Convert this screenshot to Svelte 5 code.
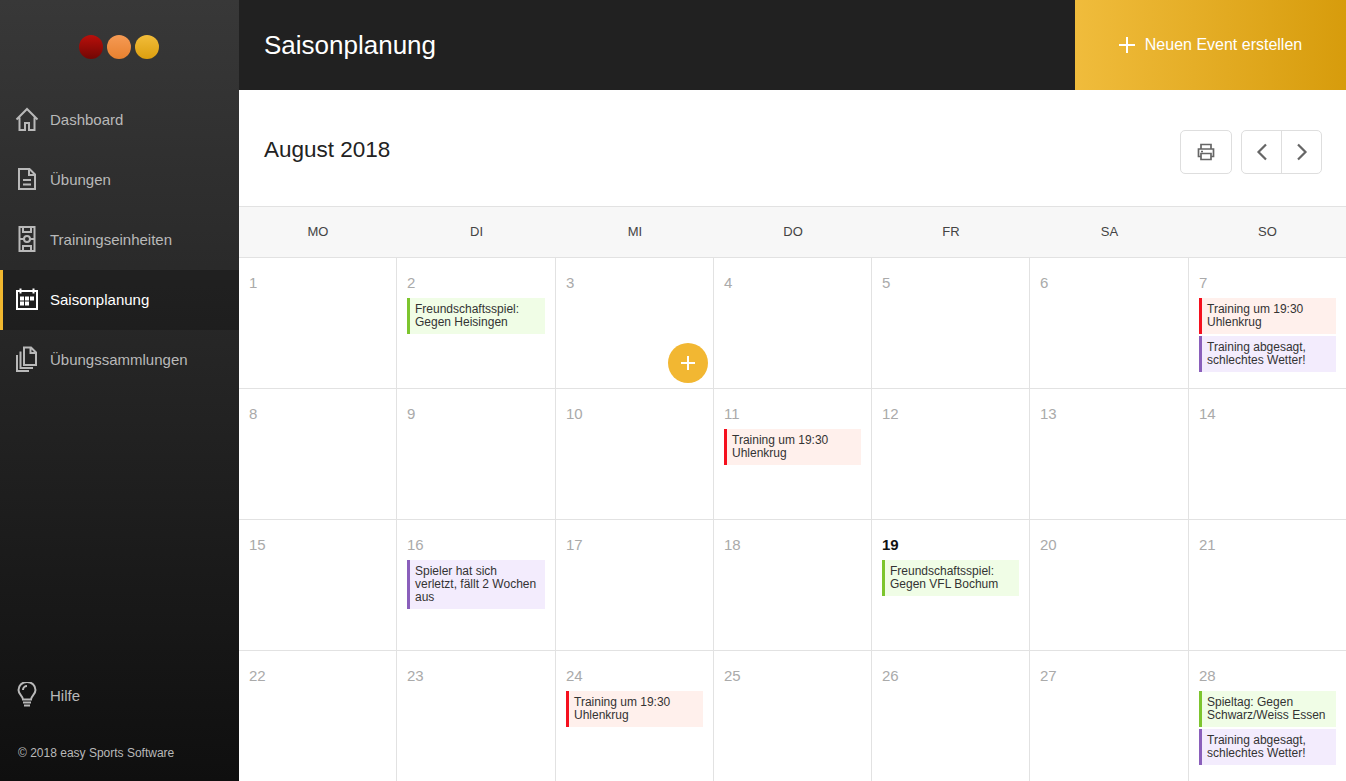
<script lang="ts">
  const nav = [
    { label: 'Dashboard', icon: 'home' },
    { label: 'Übungen', icon: 'doc' },
    { label: 'Trainingseinheiten', icon: 'field' },
    { label: 'Saisonplanung', icon: 'calendar', active: true },
    { label: 'Übungssammlungen', icon: 'copies' },
  ];

  const weekdays = ['MO', 'DI', 'MI', 'DO', 'FR', 'SA', 'SO'];

  const training = { type: 'red', text: ['Training um 19:30', 'Uhlenkrug'] };
  const cancelled = { type: 'purple', text: ['Training abgesagt,', 'schlechtes Wetter!'] };

  const events: Record<number, { type: string; text: string[] }[]> = {
    2: [{ type: 'green', text: ['Freundschaftsspiel:', 'Gegen Heisingen'] }],
    7: [training, cancelled],
    11: [training],
    16: [{ type: 'purple', text: ['Spieler hat sich', 'verletzt, fällt 2 Wochen', 'aus'] }],
    19: [{ type: 'green', text: ['Freundschaftsspiel:', 'Gegen VFL Bochum'] }],
    24: [training],
    28: [{ type: 'green', text: ['Spieltag: Gegen', 'Schwarz/Weiss Essen'] }, cancelled],
  };

  const days = Array.from({ length: 28 }, (_, i) => i + 1);
</script>

<div class="app">
  <aside class="sidebar">
    <div class="logo">
      <span class="dot dark-red"></span>
      <span class="dot orange"></span>
      <span class="dot yellow"></span>
    </div>
    <nav>
      {#each nav as item}
        <div class="nav-item" class:active={item.active}>
          <svg class="nav-icon" viewBox="0 0 24 26" fill="none" stroke="currentColor" stroke-width="2">
            {#if item.icon === 'home'}
              <path d="M1.500 13.500 12 3l10.500 10.500M4.500 11.500V24h5.500v-7h4v7h5.500V11.500" />
            {:else if item.icon === 'doc'}
              <path d="M4 3h10.500l5.500 5.500V23H4zM14 3v6h6M8 14h8M8 18.500h8" />
            {:else if item.icon === 'field'}
              <path d="M4.500 1h15v24h-15zM4.500 13H9M15 13h4.500M8 1v5h8V1M8 25v-5h8v5" />
              <circle cx="12" cy="13" r="3" />
            {:else if item.icon === 'calendar'}
              <path d="M5.500 5H2v18h20V5h-3.500M5.500 5h13M5.500 2.500v5M18.500 2.500v5" />
              <path class="solid" d="M5 10.500h4v4H5zM10 10.500h4v4h-4zM15 10.500h4v4h-4zM5 15.500h4v4H5zM10 15.500h4v4h-4z" />
            {:else if item.icon === 'copies'}
              <path d="M9 1.500h7l5 5V19H9zM15.500 1.500V7H21M5.500 5.500V22H18M2 9v16h12" />
            {/if}
          </svg>
          <span>{item.label}</span>
        </div>
      {/each}
    </nav>
    <div class="help">
      <svg class="nav-icon" viewBox="0 0 24 26" fill="none" stroke="currentColor" stroke-width="2">
        <path d="M8 17.500c0-3.500-4.500-5-4.500-9.500a8.500 8 0 0 1 17 0c0 4.500-4.500 6-4.500 9.500zM8 20.500h8M9 23.500h6M8 8a4 4 0 0 1 4-4" />
      </svg>
      <span>Hilfe</span>
    </div>
    <div class="copyright">© 2018 easy Sports Software</div>
  </aside>

  <main>
    <header class="topbar">
      <h1>Saisonplanung</h1>
      <div class="create">
        <svg viewBox="0 0 16 16" width="16" height="16" stroke="#fff" stroke-width="2"><path d="M8 0v16M0 8h16" /></svg>
        <span>Neuen Event erstellen</span>
      </div>
    </header>

    <section class="month-bar">
      <h2>August 2018</h2>
      <div class="controls">
        <div class="btn">
          <svg viewBox="0 0 20 20" width="20" height="20" fill="none" stroke="#666" stroke-width="1.700">
            <path d="M5 7V2.500h10V7M5 14.500H2.500V7h15v7.500H15M5 11.500h10v6H5zM5 9.500h2" />
          </svg>
        </div>
        <div class="btn-group">
          <div class="btn-part first">
            <svg viewBox="0 0 12 20" width="12" height="20" fill="none" stroke="#666" stroke-width="2.200"><path d="M10 2.500 2.500 10l7.500 7.500" /></svg>
          </div>
          <div class="btn-part">
            <svg viewBox="0 0 12 20" width="12" height="20" fill="none" stroke="#666" stroke-width="2.200"><path d="M2 2.500 9.500 10 2 17.500" /></svg>
          </div>
        </div>
      </div>
    </section>

    <section class="calendar">
      <div class="week-head">
        {#each weekdays as d}
          <div>{d}</div>
        {/each}
      </div>
      <div class="grid">
        {#each days as day}
          <div class="cell">
            <div class="num" class:today={day === 19}>{day}</div>
            {#each events[day] ?? [] as ev}
              <div class="event {ev.type}">
                {#each ev.text as line}
                  <div>{line}</div>
                {/each}
              </div>
            {/each}
            {#if day === 3}
              <div class="fab">
                <svg viewBox="0 0 14 14" width="14" height="14" stroke="#fff" stroke-width="2"><path d="M7 0v14M0 7h14" /></svg>
              </div>
            {/if}
          </div>
        {/each}
      </div>
    </section>
  </main>
</div>

<style>
  :global(body) {
    overflow: hidden;
  }

  .app {
    display: flex;
    width: 1346px;
    height: 781px;
    overflow: hidden;
    font-family: "Liberation Sans", Arial, sans-serif;
    background: #fff;
  }

  .sidebar {
    width: 239px;
    flex: none;
    display: flex;
    flex-direction: column;
    background: linear-gradient(180deg, #383838 0%, #0f0f0f 100%);
    color: #b9b9b9;
  }

  .logo {
    height: 90px;
    display: flex;
    align-items: center;
    justify-content: center;
    gap: 4px;
    padding: 3px 2px 0 0;
    box-sizing: border-box;
  }

  .dot {
    width: 24px;
    height: 24px;
    border-radius: 50%;
  }

  .dark-red { background: linear-gradient(180deg, #b90f0b, #720704); }
  .orange { background: linear-gradient(180deg, #f59a54, #e8812f); }
  .yellow { background: linear-gradient(180deg, #f2bd3a, #dc9f0f); }

  .nav-item {
    height: 60px;
    display: flex;
    align-items: center;
    gap: 11px;
    padding: 0 0 2px 15px;
    font-size: 15px;
    box-sizing: border-box;
  }

  .nav-item.active {
    color: #fff;
    background: rgba(0, 0, 0, 0.22);
    border-left: 3px solid #f0b72f;
    padding-left: 12px;
  }

  .nav-icon {
    width: 24px;
    height: 26px;
    flex: none;
  }

  .solid {
    fill: currentColor;
    stroke: none;
  }

  .help {
    margin-top: auto;
    display: flex;
    align-items: center;
    gap: 11px;
    padding-left: 15px;
    font-size: 15px;
    height: 30px;
  }

  .copyright {
    margin: 36px 0 21px 18px;
    font-size: 12px;
    line-height: 14px;
  }

  main {
    flex: 1;
    min-width: 0;
    display: flex;
    flex-direction: column;
  }

  .topbar {
    height: 90px;
    flex: none;
    display: flex;
    align-items: center;
    justify-content: space-between;
    background: #212121;
  }

  h1 {
    margin: 0 0 0 25px;
    font-size: 26px;
    font-weight: 400;
    color: #fff;
  }

  .create {
    width: 271px;
    height: 90px;
    display: flex;
    align-items: center;
    justify-content: center;
    gap: 10px;
    color: #fff;
    font-size: 16px;
    background: linear-gradient(90deg, #f0bc3c, #d79c0c);
  }

  .month-bar {
    height: 116px;
    flex: none;
    display: flex;
    align-items: flex-start;
    justify-content: space-between;
    padding: 40px 24px 0 25px;
    box-sizing: border-box;
  }

  h2 {
    margin: 5px 0 0;
    font-size: 22.5px;
    line-height: 30px;
    font-weight: 400;
    color: #222;
  }

  .controls {
    display: flex;
    gap: 9px;
  }

  .btn, .btn-group {
    height: 44px;
    border: 1px solid #dedede;
    border-radius: 5px;
    display: flex;
    box-sizing: border-box;
  }

  .btn {
    width: 52px;
    align-items: center;
    justify-content: center;
  }

  .btn-part {
    width: 40px;
    display: flex;
    align-items: center;
    justify-content: center;
    box-sizing: border-box;
  }

  .btn-part.first {
    width: 39px;
  }

  .btn-part + .btn-part {
    border-left: 1px solid #dedede;
  }

  .calendar {
    flex: 1;
    min-height: 0;
  }

  .week-head, .grid {
    display: grid;
    grid-template-columns: 158px 159px 158px 158px 158px 159px 157px;
  }

  .week-head {
    height: 52px;
    box-sizing: border-box;
    padding-bottom: 2px;
    background: #f7f7f7;
    border-top: 1px solid #e2e2e2;
    border-bottom: 1px solid #e2e2e2;
  }

  .week-head div {
    display: flex;
    align-items: center;
    justify-content: center;
    font-size: 13px;
    color: #444;
  }

  .grid {
    grid-auto-rows: 131px;
  }

  .cell {
    position: relative;
    box-sizing: border-box;
    padding: 16px 10px 0 10px;
    border-right: 1px solid #e2e2e2;
    border-bottom: 1px solid #e2e2e2;
  }

  .cell:nth-child(7n) {
    border-right: 0;
  }

  .num {
    font-size: 15px;
    line-height: 17px;
    margin-bottom: 7px;
    color: #aaa;
  }

  .num.today {
    color: #111;
    font-weight: 700;
  }

  .event {
    border-left: 3px solid;
    padding: 5px;
    margin-bottom: 2px;
    font-size: 12px;
    line-height: 13px;
    color: #333;
    white-space: nowrap;
  }

  .green { background: #f0fde6; border-color: #7dc52e; }
  .red { background: #fff0ec; border-color: #f5101e; }
  .purple { background: #f3ecfd; border-color: #8a5fbb; }

  .fab {
    position: absolute;
    right: 5px;
    bottom: 5px;
    width: 40px;
    height: 40px;
    border-radius: 50%;
    background: #f2b732;
    display: flex;
    align-items: center;
    justify-content: center;
  }
</style>
